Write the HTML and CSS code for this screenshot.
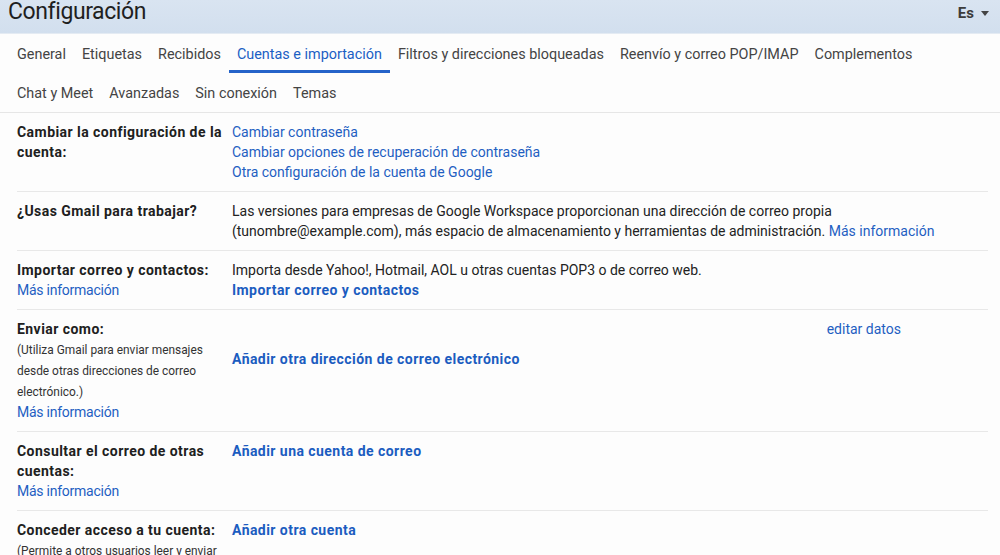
FILE: index.html
```html
<!DOCTYPE html>
<html lang="es">
<head>
<meta charset="utf-8">
<title>Configuración</title>
<link rel="stylesheet" href="styles.css">
</head>
<body>
<header class="topbar">
  <h1 class="title">Configuración</h1>
  <div class="lang">Es <span class="caret"></span></div>
</header>
<nav class="tabs">
  <div class="tabrow">
    <a class="tab">General</a>
    <a class="tab">Etiquetas</a>
    <a class="tab">Recibidos</a>
    <a class="tab active">Cuentas e importación</a>
    <a class="tab">Filtros y direcciones bloqueadas</a>
    <a class="tab">Reenvío y correo POP/IMAP</a>
    <a class="tab">Complementos</a>
  </div>
  <div class="tabrow">
    <a class="tab">Chat y Meet</a>
    <a class="tab">Avanzadas</a>
    <a class="tab">Sin conexión</a>
    <a class="tab">Temas</a>
  </div>
</nav>
<main class="settings">
  <section class="row">
    <div class="label"><b>Cambiar la configuración de la cuenta:</b></div>
    <div class="value">
      <a class="link">Cambiar contraseña</a><br>
      <a class="link">Cambiar opciones de recuperación de contraseña</a><br>
      <a class="link">Otra configuración de la cuenta de Google</a>
    </div>
  </section>
  <section class="row">
    <div class="label"><b>¿Usas Gmail para trabajar?</b></div>
    <div class="value">Las versiones para empresas de Google Workspace proporcionan una dirección de correo propia<br>(tunombre@example.com), más espacio de almacenamiento y herramientas de administración. <a class="link">Más información</a></div>
  </section>
  <section class="row">
    <div class="label"><b>Importar correo y contactos:</b><br><a class="link">Más información</a></div>
    <div class="value">Importa desde Yahoo!, Hotmail, AOL u otras cuentas POP3 o de correo web.<br><a class="link strong">Importar correo y contactos</a></div>
  </section>
  <section class="row row-send">
    <div class="label"><b>Enviar como:</b><br><span class="note">(Utiliza Gmail para enviar mensajes desde otras direcciones de correo electrónico.)</span><br><a class="link">Más información</a></div>
    <div class="value"><a class="link strong add-addr">Añadir otra dirección de correo electrónico</a></div>
    <div class="aside"><a class="link">editar datos</a></div>
  </section>
  <section class="row">
    <div class="label"><b>Consultar el correo de otras cuentas:</b><br><a class="link">Más información</a></div>
    <div class="value"><a class="link strong">Añadir una cuenta de correo</a></div>
  </section>
  <section class="row">
    <div class="label"><b>Conceder acceso a tu cuenta:</b><br><span class="note">(Permite a otros usuarios leer y enviar correos en tu nombre.)</span></div>
    <div class="value"><a class="link strong">Añadir otra cuenta</a></div>
  </section>
</main>
</body>
</html>
```
FILE: styles.css
```css
* { box-sizing: border-box; }
html, body { margin: 0; padding: 0; }
body {
  font-family: Roboto, "Liberation Sans", Arial, sans-serif;
  font-size: 14px;
  color: #222;
  background: #fdfdfd;
  width: 1000px;
  height: 555px;
  overflow: hidden;
}
.topbar {
  height: 34px;
  background: linear-gradient(#d9e4f1, #d2dfee);
  display: flex;
  align-items: flex-start;
  justify-content: space-between;
  padding: 0 11px 0 8px;
  border-bottom: 1px solid #e4ebf3;
}
.title {
  margin: 0;
  font-size: 23px;
  line-height: 24px;
  font-weight: 400;
  color: #1f1f1f;
  letter-spacing: -0.4px;
}
.lang {
  margin-top: 4px;
  font-size: 15px;
  font-weight: 700;
  color: #3c3c3c;
  display: flex;
  align-items: center;
  gap: 7px;
}
.caret {
  width: 0; height: 0;
  border-left: 4px solid transparent;
  border-right: 4px solid transparent;
  border-top: 5px solid #444;
}
.tabs {
  padding-left: 9px;
  border-bottom: 1px solid #e6e6e6;
}
.tabrow {
  display: flex;
  height: 39px;
}
.tab {
  display: flex;
  align-items: center;
  padding: 5px 8px 0;
  font-size: 14.4px;
  color: #444;
  border-bottom: 3px solid transparent;
  white-space: nowrap;
  cursor: pointer;
}
.tab.active {
  color: #1b5fc4;
  border-bottom-color: #2563c9;
}
.settings {
  padding: 0 12px 0 17px;
}
.row {
  display: grid;
  grid-template-columns: 215px 1fr;
  padding: 9px 0 9px 0;
  border-bottom: 1px solid #e8e8e8;
  line-height: 20px;
}
.row-send {
  grid-template-columns: 215px 1fr auto;
}
.label b { font-weight: 700; color: #202020; letter-spacing: 0.45px; }
.label { padding-right: 4px; }
.note { font-size: 11.9px; color: #333; }
.value { color: #222; }
.link { color: #1f5fc2; cursor: pointer; }
.label .link { letter-spacing: -0.25px; }
.link.strong { font-weight: 700; color: #1b5cc0; letter-spacing: 0.45px; }
.add-addr { display: inline-block; margin-top: 30px; }
.aside { padding-right: 87px; }
```
